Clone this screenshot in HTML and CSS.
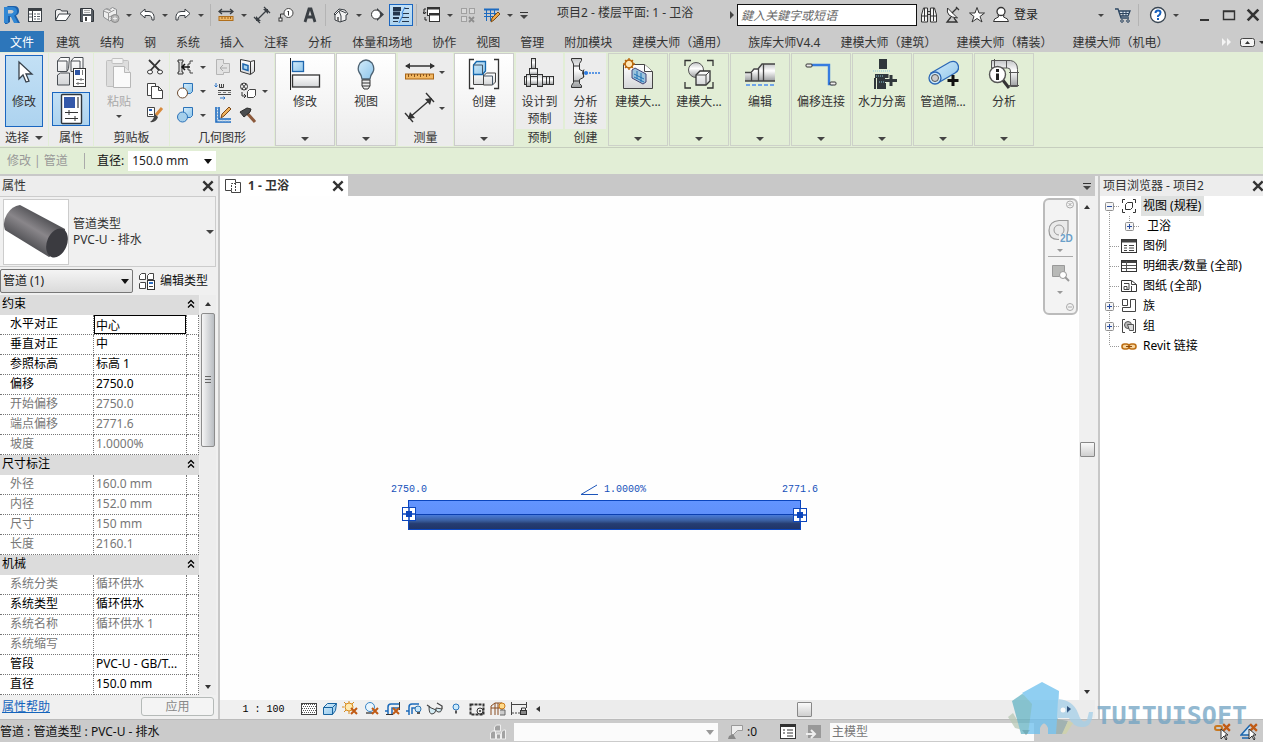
FILE: index.html
```html
<!DOCTYPE html>
<html lang="zh-CN">
<head>
<meta charset="utf-8">
<meta name="viewport" content="width=device-width, initial-scale=1">
<title>项目2 - 楼层平面: 1 - 卫浴</title>
<link rel="stylesheet" href="styles.css">
</head>
<body>
<svg class="sprite" aria-hidden="true">
  <defs>
    <linearGradient id="steel" x1="0" y1="0" x2="0" y2="1"><stop offset="0" stop-color="#c4c6c8"/><stop offset=".4" stop-color="#fff"/><stop offset="1" stop-color="#9a9c9e"/></linearGradient>
    <linearGradient id="soft" x1="0" y1="0" x2="0" y2="1"><stop offset="0" stop-color="#fff"/><stop offset="1" stop-color="#d4d6d8"/></linearGradient>
    <linearGradient id="sky" x1="0" y1="0" x2="1" y2="1"><stop offset="0" stop-color="#d4ecfa"/><stop offset="1" stop-color="#8cc4ea"/></linearGradient>
  </defs>
  <symbol id="leaf" viewBox="0 0 20 20"><path d="M9.500 0V20M10 10.500H20" stroke="#999" stroke-dasharray="1 1" fill="none"/></symbol>
  <symbol id="last" viewBox="0 0 20 20"><path d="M9.500 0V10M10 10.500H20" stroke="#999" stroke-dasharray="1 1" fill="none"/></symbol>
  <symbol id="line" viewBox="0 0 20 20"><path d="M9.500 0V20" stroke="#999" stroke-dasharray="1 1" fill="none"/></symbol>
  <symbol id="plus" viewBox="0 0 20 20"><path d="M9.500 0V20M10 10.500H20" stroke="#999" stroke-dasharray="1 1"/><rect x="5.500" y="6.500" width="8" height="8" rx="1" fill="#f4f4f4" stroke="#919191"/><path d="M7 10.500h5M9.500 8v5" stroke="#2b4ea0"/></symbol>
  <symbol id="plus-alone" viewBox="0 0 20 20"><path d="M9.500 0V6M14 10.500H20" stroke="#999" stroke-dasharray="1 1"/><rect x="5.500" y="6.500" width="8" height="8" rx="1" fill="#f4f4f4" stroke="#919191"/><path d="M7 10.500h5M9.500 8v5" stroke="#2b4ea0"/></symbol>
  <symbol id="minus" viewBox="0 0 20 20"><path d="M9.500 14V20M14 10.500H20" stroke="#999" stroke-dasharray="1 1"/><rect x="5.500" y="6.500" width="8" height="8" rx="1" fill="#f4f4f4" stroke="#919191"/><path d="M7 10.500h5" stroke="#2b4ea0"/></symbol>
  <symbol id="cross" viewBox="0 0 12 12"><path d="M2 2l8 8M10 2l-8 8" stroke="#333" stroke-width="2"/></symbol>
  <symbol id="redx" viewBox="0 0 8 8"><path d="M1 1l6 6M7 1L1 7" stroke="#c05a14" stroke-width="2"/></symbol>
  <symbol id="chev" viewBox="0 0 8 10"><path d="M1 4.500L4 1.500l3 3M1 8.500l3-3 3 3" fill="none" stroke="#000" stroke-width="1.300"/></symbol>
</svg>

<header class="titlebar">
  <nav class="quick" aria-label="快速访问工具栏">
    <button class="app" aria-label="应用程序"><svg width="18" height="20" viewBox="0 0 18 20"><path d="M2 3l3-2h6q5 0 5 5 0 3-3 4.500L17 18h-5l-3.500-6.500L7 12v5l-3 2H2z" fill="#1d5fa8"/><path d="M1 2h8q5 0 5 4.500 0 3-3 4L15 18h-4L7.500 11H5v7H1z" fill="#3187d4"/><path d="M5 5h3.500q2 0 2 1.500t-2 2H5z" fill="#cbcbcb"/></svg></button>
    <button aria-label="项目"><svg width="16" height="16" viewBox="0 0 16 16"><rect x="1.500" y="1.500" width="13" height="13" fill="#fff" stroke="#3a3f44"/><path d="M1 3h14" stroke="#3a3f44" stroke-width="2"/><path d="M5.500 4v10" stroke="#3a3f44"/><path d="M7 7h2M10 7h3M7 9.500h2M10 9.500h3M7 12h2M10 12h3M2 7h3M2 10h3" stroke="#59616a"/></svg></button>
    <span class="space"></span>
    <button aria-label="打开"><svg width="18" height="16" viewBox="0 0 18 16"><path d="M1.500 13V3.500l2-1h3l1 1.500h6v3" fill="#eee" stroke="#3a3f44"/><path d="M1.500 13.500L5 7h11.500L12 13.500z" fill="#fff" stroke="#3a3f44"/></svg></button>
    <button aria-label="保存"><svg width="16" height="16" viewBox="0 0 16 16"><path d="M1.500 1.500h11l2 2v11h-13z" fill="#555b61" stroke="#30353a"/><rect x="4" y="2" width="8" height="5" fill="#f5f5f5"/><path d="M5 3.500h6M5 5.500h6" stroke="#aaa"/><rect x="4" y="9" width="8" height="6" fill="#fff"/><rect x="6" y="10" width="2" height="4" fill="#444"/></svg></button>
    <button aria-label="同步"><svg width="18" height="18" viewBox="0 0 18 18"><path d="M1.500 4.500l3-2 3 1 3-2 4 2V9l-3 4-4 2-6-4z" fill="#eee" stroke="#8d8f91"/><path d="M1.500 5l5 2v7M6.500 7l6-3M4 3l5 2M7 11l5-2" stroke="#999" fill="none"/><circle cx="13" cy="12.500" r="4" fill="#b5b5b5" stroke="#8b8b8b"/><path d="M11 12.500h4M13 10.500v4" stroke="#eee"/></svg></button>
    <button class="drop" aria-label="同步选项"></button>
    <button aria-label="放弃"><svg width="18" height="16" viewBox="0 0 18 16"><path d="M7 2L2 6.500 7 11V8.500h4q3 0 3 4.500h2q1-8-5-8.500H7z" fill="#fff" stroke="#3a3f44"/></svg></button>
    <button class="drop" aria-label="放弃列表"></button>
    <button aria-label="重做"><svg width="18" height="16" viewBox="0 0 18 16"><path d="M11 2l5 4.500-5 4.500V8.500H7q-3 0-3 4.500H2Q1 5 7 4.500h4z" fill="#fff" stroke="#3a3f44"/></svg></button>
    <button class="drop" aria-label="重做列表"></button>
    <span class="sep"></span>
    <button aria-label="测量"><svg width="16" height="14" viewBox="0 0 16 14"><path d="M1 3.500h14M4 1L1 3.500 4 6M12 1l3 2.500L12 6" fill="none" stroke="#3a3f44" stroke-width="1.300"/><rect x="1" y="8.500" width="14" height="4" fill="#f0b866" stroke="#b06f1c"/><path d="M4 9v2M7 9v2M10 9v2M12.500 9v2" stroke="#98601a"/></svg></button>
    <button class="drop" aria-label="测量选项"></button>
    <button aria-label="对齐尺寸标注"><svg width="18" height="18" viewBox="0 0 18 18"><path d="M4 14L14 4M1 11l6 6M11 1l6 6" stroke="#3a3f44" stroke-width="1.300"/><path d="M3 15v-5l5 5zM15 3v5l-5-5z" fill="#3a3f44"/></svg></button>
    <button aria-label="按类别标记"><svg width="18" height="16" viewBox="0 0 18 16"><circle cx="11.500" cy="6" r="4.500" fill="#fff" stroke="#444"/><path d="M10.500 5l1-1v4.500M7 7H3.500v5" fill="none" stroke="#333"/><rect x="2" y="11" width="3" height="3" fill="#fff" stroke="#333"/></svg></button>
    <button aria-label="文字"><svg width="16" height="16" viewBox="0 0 16 16"><path d="M3 15L7 2h2l4 13M5 10h6" fill="none" stroke="#3a3f44" stroke-width="2.800"/></svg></button>
    <span class="sep"></span>
    <button aria-label="默认三维视图"><svg width="18" height="16" viewBox="0 0 18 16"><path d="M2 7l5-5 6 1 3 4-2 1v5l-6 2-5-2V8z" fill="#f2f2f2" stroke="#3a3f44"/><path d="M2 7l1 1 4-4 2 5v6M7 3l7 3" fill="none" stroke="#3a3f44"/><path d="M5 10h2v4H5z" fill="#777"/></svg></button>
    <button class="drop" aria-label="三维视图选项"></button>
    <button aria-label="剖面"><svg width="16" height="16" viewBox="0 0 16 16"><path d="M8 1l7 6.500-7 6.500z" fill="#3a3f44"/><circle cx="7" cy="7.500" r="4.500" fill="#fff" stroke="#333"/></svg></button>
    <button class="on" aria-label="细线" aria-pressed="true"><svg width="18" height="18" viewBox="0 0 18 18"><path d="M1 3h8M1 7.500h7" stroke="#24364c" stroke-width="4"/><path d="M1 12h6" stroke="#24364c" stroke-width="2"/><path d="M1 15.500h5M12 2.500h5M11 7.500h6M10 11.500h7M10 15.500h7" stroke="#24364c"/><path d="M13 1l-3 6 1 2-4 8" fill="none" stroke="#2f80dc"/></svg></button>
    <span class="sep"></span>
    <button aria-label="切换窗口"><svg width="18" height="18" viewBox="0 0 18 18"><rect x="4.500" y="1.500" width="12" height="8" fill="#fff" stroke="#333"/><path d="M4 2.500h13" stroke="#333" stroke-width="2"/><rect x="6.500" y="7.500" width="10" height="8" fill="#fff" stroke="#333"/><path d="M6 8.500h11" stroke="#333" stroke-width="2"/><path d="M3 3H1v5M0 6l1.500 2L3 6M4 14H2v-3" fill="none" stroke="#222"/></svg></button>
    <button class="drop" aria-label="窗口列表"></button>
    <button aria-label="关闭非活动"><svg width="18" height="18" viewBox="0 0 18 18"><g fill="#d8d8d8" stroke="#a0a0a0"><rect x="2.500" y="2.500" width="5" height="5"/><rect x="10.500" y="2.500" width="5" height="5"/><rect x="2.500" y="10.500" width="5" height="5"/></g><path d="M10 11l5 5M15 11l-5 5" stroke="#8e8e8e" stroke-width="1.800"/></svg></button>
    <button aria-label="编辑明细表"><svg width="18" height="16" viewBox="0 0 18 16"><path d="M1 2.500h15" stroke="#1d6bc0" stroke-width="2"/><path d="M1 6.500h14M1 9.500h9M3.500 3v11M7.500 3v11M11.500 3v6" stroke="#1d6bc0"/><path d="M8 15l1-4 6-6 2 2-6 6z" fill="#f0a848" stroke="#7a4c16"/></svg></button>
    <button class="drop" aria-label="明细表选项"></button>
    <button class="custom" aria-label="自定义快速访问工具栏"></button>
  </nav>
  <h1>项目2 - 楼层平面: 1 - 卫浴</h1>
  <button class="right-caret" aria-label="展开搜索"></button>
  <input class="search" type="search" aria-label="搜索" placeholder="鍵入关鍵字或短语">
  <div class="account">
    <button aria-label="搜索"><svg width="18" height="18" viewBox="0 0 18 18"><path d="M1.500 9l2-7h4v14h-6zM10.500 2h4l2 7v7h-6z" fill="#f4f4f4" stroke="#333"/><path d="M2 10h5M11 10h5M4.500 2v13M13.500 2v13M8 5.500h2M8 8.500h2" stroke="#333"/></svg></button>
    <button aria-label="通讯中心"><svg width="18" height="18" viewBox="0 0 18 18"><path d="M3.500 2q-2 9 10 10z" fill="#fff" stroke="#333"/><path d="M8 7l5-5M7 11l-4 5h10l-3-4M12 1l3 3" fill="none" stroke="#333" stroke-width="1.300"/></svg></button>
    <button aria-label="收藏夹"><svg width="18" height="18" viewBox="0 0 18 18"><path d="M9 1.500l2 5.500h5.500L12 10.500l2 5.500-5-3.500L4 16l2-5.500L1.500 7H7z" fill="#fff" stroke="#333"/></svg></button>
    <button aria-label="用户"><svg width="18" height="18" viewBox="0 0 18 18"><path d="M1.500 15.500q0-3 5-4.500l-.5-2h6l-.5 2q5 1.500 5 4.500z" fill="#fff" stroke="#333"/><circle cx="9" cy="5.500" r="4" fill="#fff" stroke="#333" stroke-width="1.300"/></svg></button>
    <a href="#login">登录</a>
  </div>
  <div class="window-tools">
    <button class="drop" aria-label="账户选项"></button>
    <button class="cart" aria-label="应用商店"><svg width="18" height="18" viewBox="0 0 18 18"><path d="M1 3h3l3 9h8M5 5h11l-2 5H6" fill="#dce7f2" stroke="#2c4560" stroke-width="1.300"/><path d="M9 5v5M12 5v5M6 7.500h9" stroke="#2c4560"/><circle cx="8" cy="15" r="1.300" fill="none" stroke="#2c4560"/><circle cx="14" cy="15" r="1.300" fill="none" stroke="#2c4560"/></svg></button>
    <span class="sep"></span>
    <button class="help" aria-label="帮助"><svg width="18" height="18" viewBox="0 0 18 18"><circle cx="9" cy="9" r="7.500" fill="#fff" stroke="#3a4652" stroke-width="1.300"/><path d="M6.500 7q0-2.500 2.500-2.500t2.500 2-2.500 3.500v1M9 12v2" fill="none" stroke="#1660bd" stroke-width="2"/></svg></button>
    <button class="drop" aria-label="帮助选项"></button>
    <button class="win min" aria-label="最小化"><svg width="14" height="14" viewBox="0 0 14 14"><path d="M3 12h9" stroke="#333" stroke-width="2"/></svg></button>
    <button class="win" aria-label="最大化"><svg width="14" height="14" viewBox="0 0 14 14"><path d="M1.500 3h11v8.500h-11zM1 3.500h12" fill="none" stroke="#333" stroke-width="1.400"/></svg></button>
    <button class="win last" aria-label="关闭"><svg width="16" height="16" viewBox="0 0 12 12"><use href="#cross"/></svg></button>
  </div>
</header>

<nav class="tabs" aria-label="功能区选项卡">
  <a class="file" href="#file">文件</a>
  <a href="#t1">建筑</a><a href="#t2">结构</a><a href="#t3">钢</a><a href="#t4">系统</a><a href="#t5">插入</a><a href="#t6">注释</a><a href="#t7">分析</a><a href="#t8">体量和场地</a><a href="#t9">协作</a><a href="#t10">视图</a><a href="#t11">管理</a><a href="#t12">附加模块</a><a href="#t13">建模大师（通用）</a><a href="#t14">族库大师V4.4</a><a href="#t15">建模大师（建筑）</a><a href="#t16">建模大师（精装）</a><a href="#t17">建模大师（机电）</a>
  <button class="more" aria-label="更多选项卡"><svg width="42" height="14" viewBox="0 0 42 14"><path d="M1 3l4 4-4 4zM6 3l4 4-4 4z" fill="#f4f4f4"/><rect x="19.500" y="3.500" width="14" height="8" rx="2" fill="#f4f4f4" stroke="#444"/><path d="M24 9l2.500-3L29 9z" fill="#333"/><path d="M38 6h6l-3 3z" fill="#333"/></svg></button>
</nav>

<main class="ribbon">
  <section class="panel select">
    <div class="tools"><button class="big on"><svg width="32" height="32" viewBox="0 0 32 32"><path d="M11 5v17l4-4 3 7 3-1-3-7h6z" fill="#fff" stroke="#38424c" stroke-width="1.300"/></svg><span>修改</span></button></div>
    <button class="name">选择<i class="tri"></i></button>
  </section>
  <section class="panel props">
    <div class="tools stack">
      <button class="mid" aria-label="类型属性"><svg width="32" height="32" viewBox="0 0 32 32"><g fill="url(#soft)" stroke="#4a4f54"><path d="M2.500 5l3-3.500h9l-1 11-1.500 3H2.500zM16 5l3-3.500h9V12l-3 3.500h-9zM2.500 19l3-2h9v12h-12z"/><path d="M2.500 5h9.500v10M16 5h9v10" fill="none"/></g><rect x="18.500" y="12.500" width="12" height="18" fill="#fff" stroke="#333"/><rect x="20" y="14" width="5" height="5" fill="#2f55a5"/><path d="M27.500 14v5M21 23.500h8M21 27.500h8M26 22v3M23 26v3" stroke="#777"/></svg></button>
      <button class="mid on" aria-label="属性"><svg width="32" height="32" viewBox="0 0 32 32"><rect x="6.500" y="1.500" width="20" height="29" rx="1" fill="#fff" stroke="#30363c" stroke-width="1.400"/><rect x="9" y="4" width="11" height="11" fill="#3459aa"/><rect x="22" y="4" width="2" height="11" fill="#888"/><path d="M10 19.500h13M10 25.500h13M14 17v5M20 23v5" stroke="#333"/></svg></button>
    </div>
    <button class="name">属性</button>
  </section>
  <section class="panel clip">
    <div class="tools">
      <button class="big off" disabled><svg width="32" height="32" viewBox="0 0 32 32"><rect x="3.500" y="3.500" width="22" height="26" rx="1" fill="#ddd" stroke="#c0c0c0"/><rect x="9" y="1.500" width="11" height="5" rx="1" fill="#f3f3f3" stroke="#c0c0c0"/><path d="M10.500 9.500h11l6 6v15h-17z" fill="#fafafa" stroke="#b8b8b8"/><path d="M21.500 9.500v6h6" fill="#e8e8e8" stroke="#b8b8b8"/></svg><span>粘贴</span><i class="tri small"></i></button>
      <div class="grid one">
        <button aria-label="剪切"><svg width="18" height="18" viewBox="0 0 18 18"><path d="M3 2l11 11M14 2L4 13" stroke="#333" stroke-width="1.800"/><ellipse cx="4" cy="14" rx="2.500" ry="2" fill="#fff" stroke="#333"/><ellipse cx="14" cy="14" rx="2.500" ry="2" fill="#fff" stroke="#333"/></svg></button>
        <button aria-label="复制"><svg width="18" height="18" viewBox="0 0 18 18"><path d="M1.500 1.500h8v12h-8z" fill="#fff" stroke="#444"/><path d="M5.500 4.500h7l4 4v8h-11zM12.500 4.500v4h4" fill="#fff" stroke="#444"/></svg></button>
        <button aria-label="匹配类型"><svg width="18" height="18" viewBox="0 0 18 18"><path d="M1.500 1.500h7v9h-7z" fill="#fff" stroke="#444"/><path d="M3 4h3" stroke="#2a62b8" stroke-width="2"/><path d="M3 8.500h4" stroke="#444"/><path d="M16 2l-6 7" stroke="#d88a3c" stroke-width="3"/><path d="M9 8l3 3q-2 6-8 5 4-3 5-8" fill="#444"/></svg></button>
      </div>
    </div>
    <button class="name">剪贴板</button>
  </section>
  <section class="panel geo">
    <div class="tools">
      <div class="grid three">
        <button aria-label="连接端切割"><svg width="18" height="18" viewBox="0 0 18 18"><path d="M2 2h5v2H6v10h1v2H2v-2h1V4H2z" fill="#ddd" stroke="#333"/><path d="M17 3h-3v3h-2v6h2v3h3" fill="#eee" stroke="#444"/><path d="M14 9H6M9 6L6 9l3 3" fill="none" stroke="#111" stroke-width="1.500"/></svg></button><button class="drop" aria-label="切割选项"></button>
        <button aria-label="拆分"><svg width="18" height="18" viewBox="0 0 18 18"><path d="M2.500 1.500h7v4h6v9h-6v2h-7z" fill="#e2e2e2" stroke="#b5b5b5"/><path d="M13 10H6M9 7l-3 3 3 3" fill="none" stroke="#aaa"/></svg></button>
        <button aria-label="拆分面"><svg width="18" height="18" viewBox="0 0 18 18"><path d="M1.500 1.500l10 2 4-1v11l-4 3-10-3z" fill="url(#soft)" stroke="#333"/><path d="M11.500 4v12" stroke="#333"/><path d="M4 6l5 1.500v5L4 11z" fill="#a9d5f0" stroke="#1e66ad" stroke-width="1.500"/></svg></button><span></span>
        <button aria-label="剪切几何图形"><svg width="18" height="18" viewBox="0 0 18 18"><path d="M7.500 1.500h9v8l-2 2h-7z" fill="url(#sky)" stroke="#2b72b8"/><circle cx="6.500" cy="11" r="5" fill="#fff" stroke="#6b4a30"/></svg></button><button class="drop" aria-label="剪切选项"></button>
        <button aria-label="梁柱连接"><svg width="18" height="18" viewBox="0 0 18 18"><path d="M2 1v4M.5 3.500L2 5l1.500-1.500M6 16h5M9.500 14.500L11 16l-1.500 1.500" stroke="#2b74c8" fill="none"/><path d="M5.500 2v3.500h4V2M7.500 2v3" stroke="#444" fill="none"/><path d="M4 8.500h13M4 12.500h13" stroke="#444"/><path d="M4 10.500h13" stroke="#777" stroke-dasharray="3 2"/></svg></button>
        <button aria-label="墙连接"><svg width="18" height="18" viewBox="0 0 18 18"><circle cx="5" cy="4.500" r="3.500" fill="#eee" stroke="#333"/><path d="M3 2l4 5M7 2L3 7M3 10v4h4M5 12l2 2-2 2" fill="none" stroke="#333"/><path d="M8.500 9.500l2-2h6v6l-2 2h-6z" fill="#fff" stroke="#444"/></svg></button><button class="drop" aria-label="墙选项"></button>
        <button aria-label="连接几何图形"><svg width="18" height="18" viewBox="0 0 18 18"><path d="M7.500 1.500h9v8l-2 2h-7z" fill="url(#sky)" stroke="#2b72b8"/><circle cx="6.500" cy="11" r="5" fill="#a5cfeb" stroke="#2b72b8"/></svg></button><button class="drop" aria-label="连接选项"></button>
        <button aria-label="填色"><svg width="18" height="18" viewBox="0 0 18 18"><path d="M2 1v15h15M5 1v12h12" fill="none" stroke="#1d6bc0" stroke-width="1.600"/><path d="M3.500 1v14h13" fill="none" stroke="#8bb9e4" stroke-dasharray="2 1"/><path d="M7 12l1-4 7-7 2 2-7 7z" fill="#f0b25c" stroke="#7c4818"/></svg></button>
        <button aria-label="拆除"><svg width="18" height="18" viewBox="0 0 18 18"><path d="M8 7l8 9" stroke="#8c5a3c" stroke-width="3"/><path d="M1 6l7-4 4 1-1 3-6 5z" fill="#4a4d50" stroke="#2b2b2b"/></svg></button><span></span>
      </div>
    </div>
    <button class="name">几何图形</button>
  </section>
  <button class="card light"><svg width="32" height="32" viewBox="0 0 32 32"><path d="M1.500 0v32" stroke="#222"/><rect x="3.500" y="3.500" width="11" height="10" fill="url(#sky)" stroke="#1e66ad" stroke-width="1.300"/><rect x="3.500" y="17" width="27" height="12" fill="url(#soft)" stroke="#333" stroke-width="1.300"/></svg><span>修改</span><i class="tri"></i></button>
  <button class="card light"><svg width="32" height="32" viewBox="0 0 32 32"><path d="M12 21q0-3-3-7-2-4 1-9 6-6 12 0 3 5 1 9-3 4-3 7z" fill="url(#sky)" stroke="#4d6272" stroke-width="1.300"/><path d="M12 22h8v6l-2 3h-4l-2-3zM12 25h8M12 28h8" fill="#eee" stroke="#333"/></svg><span>视图</span><i class="tri"></i></button>
  <section class="panel measure">
    <div class="tools rows">
      <div class="pair"><button aria-label="测量长度"><svg width="32" height="32" viewBox="0 0 32 32"><path d="M2 10h28" stroke="#333" stroke-width="1.500"/><path d="M6 7l-5 3 5 3zM26 7l5 3-5 3z" fill="#333"/><rect x="1.500" y="18" width="28" height="5" fill="#f2b762" stroke="#a86516"/><path d="M4.500 18v3M7.500 18v2M10.500 18v3M13.500 18v2M16.500 18v3M19.500 18v2M22.500 18v3M25.500 18v2" stroke="#88541c"/></svg></button><button class="drop" aria-label="长度选项"></button></div>
      <div class="pair"><button aria-label="尺寸标注"><svg width="32" height="32" viewBox="0 0 32 32"><path d="M5 26L27 7M1 21l8 9M22 1l8 9" stroke="#333" stroke-width="1.400"/><path d="M4 27l2-7 5 6zM28 6l-7 1 5 6z" fill="#333"/></svg></button><button class="drop" aria-label="标注选项"></button></div>
    </div>
    <button class="name">测量</button>
  </section>
  <button class="card light"><svg width="32" height="32" viewBox="0 0 32 32"><path d="M6 1.500H1.500v29H6M26 1.500h4.500v29H26" fill="none" stroke="#333" stroke-width="1.300"/><path d="M5.500 16.500h10v10h-10zM15.500 18l3-3h9v9l-3 3h-9z" fill="url(#soft)" stroke="#444"/><path d="M5.500 7l3-3.500h9V13l-3 3.500h-9z" fill="url(#sky)" stroke="#1769ae" stroke-width="1.300"/><path d="M5.500 7h9v9M15.500 18h9v9" fill="none" stroke="#456"/></svg><span>创建</span><i class="tri"></i></button>
  <section class="panel prefab">
    <div class="tools"><button class="big two"><svg width="32" height="32" viewBox="0 0 32 32"><g fill="url(#steel)" stroke="#333"><rect x="8.500" y="1.500" width="4" height="10"/><rect x="6.500" y="11.500" width="8" height="6"/><rect x="1.500" y="19.500" width="29" height="8"/><rect x="3.500" y="17.500" width="4" height="12"/><rect x="14.500" y="17.500" width="5" height="12"/></g><path d="M23.500 20v7M26.500 20v7" stroke="#333"/></svg><span>设计到<br>预制</span></button></div>
    <button class="name green">预制</button>
  </section>
  <section class="panel analyse">
    <div class="tools"><button class="big two"><svg width="32" height="32" viewBox="0 0 32 32"><path d="M1.500 1.500h10v2l-2 3v6l4 2v6l-4 2v4l2 2v2h-10v-2l2-3V7l-2-4zM4 9h5M4 24h5" fill="url(#steel)" stroke="#333"/><path d="M14 12.500q-3 3.500 0 7" fill="none" stroke="#333"/><path d="M16 16h15" stroke="#2d7be0" stroke-width="1.300" stroke-dasharray="2 1"/><circle cx="16" cy="16" r="2" fill="#2d7be0"/></svg><span>分析<br>连接</span></button></div>
    <button class="name green">创建</button>
  </section>
  <button class="card"><svg width="32" height="32" viewBox="0 0 32 32"><path d="M1.500 6.500h21l8 7v17h-29z" fill="url(#soft)" stroke="#444"/><path d="M22.500 6.500v7h8" fill="#fff" stroke="#444"/><path d="M10 12l3-2 11 6v8l-3 2-11-6z" fill="#9cc4dd" stroke="#447"/><path d="M12 16l10 5M12 19l10 5M15 13v8M19 15v9" stroke="#2073b5"/><circle cx="7" cy="6" r="4" fill="#ffe7b5" stroke="#b8660c" stroke-width="1.500"/><path d="M7 0v3M7 9v3M1 6h3M10 6h3M3 2l2 2M9 8l2 2M11 2L9 4M5 8l-2 2" stroke="#b8660c" stroke-width="1.300"/></svg><span>建模大...</span><i class="tri"></i></button>
  <button class="card"><svg width="32" height="32" viewBox="0 0 32 32"><path d="M2 8V2.500h6M24 2.500h6V8M2 24v6h6M24 30h6v-6" fill="none" stroke="#333" stroke-width="1.300"/><circle cx="13" cy="12" r="7.500" fill="url(#steel)" stroke="#555"/><path d="M13 17l4-4h10v10l-4 4H13z" fill="url(#soft)" stroke="#333" stroke-width="1.300"/><path d="M13 17h10v10M23 17l4-4" fill="none" stroke="#444"/></svg><span>建模大...</span><i class="tri"></i></button>
  <button class="card"><svg width="32" height="32" viewBox="0 0 32 32"><path d="M1 15h6v8H1zM7 12l7-2v13H7zM14 9l6-3v17h-6z" fill="url(#steel)"/><path d="M19 6h12v17H19z" fill="url(#steel)"/><path d="M1 14.500h6l3-3.500h4l4-5h13M1 23h30M7.500 15v8M14.500 10v13M19.500 6v17" fill="none" stroke="#444" stroke-width="1.300"/><path d="M2 27h29" stroke="#4b8df0" stroke-width="1.500" stroke-dasharray="4 2"/></svg><span>编辑</span><i class="tri"></i></button>
  <button class="card"><svg width="32" height="32" viewBox="0 0 32 32"><path d="M6 7h18v19h4" fill="none" stroke="#367ce0" stroke-width="2.400"/><rect x="1" y="6" width="6" height="3" rx="1" fill="#eee" stroke="#333"/><rect x="25" y="24" width="6" height="3" rx="1" fill="#eee" stroke="#333"/></svg><span>偏移连接</span><i class="tri"></i></button>
  <button class="card"><svg width="32" height="32" viewBox="0 0 32 32"><path d="M13 1h8v10h-8zM9 16h14v5h-3v10h-9V20H9zM8 20h2v11H8z" fill="#30373b"/><path d="M7 13h18M10 18h7M13 24h7" stroke="#8ac7d8" stroke-dasharray="1 1"/><path d="M25 16v12M19 22.500h12" stroke="#e2eed6" stroke-width="5"/><path d="M25 17v11M19 22.500h12" stroke="#30373b" stroke-width="3"/></svg><span>水力分离</span><i class="tri"></i></button>
  <button class="card"><svg width="32" height="32" viewBox="0 0 32 32"><path d="M4 15L23 4q6-2 8 3t-3 8L11 25z" fill="url(#sky)" stroke="#2b67b5" stroke-width="1.300"/><circle cx="8" cy="20" r="6" fill="#cce8f8" stroke="#2b67b5" stroke-width="1.300"/><circle cx="8" cy="20" r="3.500" fill="#ccc" stroke="#555"/><path d="M26 17v11M20.500 22.500h11" stroke="#111" stroke-width="3"/></svg><span>管道隔...</span><i class="tri"></i></button>
  <button class="card"><svg width="32" height="32" viewBox="0 0 32 32"><path d="M3.500 2.500h19q7 1 7 9v17h-7V13q0-3-3-3h-16z" fill="url(#steel)" stroke="#555"/><path d="M6.500 1v11M21 27.500h10M21 14.500h10M18.500 2v8" stroke="#555"/><path d="M14 21l7 9" stroke="#333" stroke-width="3"/><circle cx="9.500" cy="16.500" r="8" fill="#fff" stroke="#555" stroke-width="1.400"/><path d="M9.500 11v3M9.500 15.500V22" stroke="#222" stroke-width="3"/></svg><span>分析</span><i class="tri"></i></button>
</main>

<section class="options">
  <span class="mode">修改 | 管道</span>
  <label for="dia">直径:</label>
  <span class="drop-box"><select id="dia"><option>150.0 mm</option></select></span>
</section>

<div class="work">
  <aside class="properties">
    <div class="head"><h2>属性</h2><button aria-label="关闭属性"><svg width="14" height="14" viewBox="0 0 12 12"><use href="#cross"/></svg></button></div>
    <button class="type">
      <svg class="thumb" width="66" height="66" viewBox="0 0 66 66"><defs><linearGradient id="pipe" gradientUnits="userSpaceOnUse" x1="42" y1="16" x2="24" y2="46"><stop offset="0" stop-color="#4c4c50"/><stop offset=".5" stop-color="#89868a"/><stop offset="1" stop-color="#515155"/></linearGradient></defs><rect x=".5" y=".5" width="65" height="65" fill="#fff" stroke="#ccc"/><path d="M17 6Q9 7 4 15T2 31L46 58Q64 50 62 30z" fill="url(#pipe)"/><ellipse cx="54" cy="44" rx="10" ry="15" transform="rotate(22 54 44)" fill="#3b3b40"/></svg>
      <span>管道类型<br>PVC-U - 排水</span><i class="tri"></i>
    </button>
    <div class="filter">
      <span class="drop-box"><select aria-label="图元"><option>管道 (1)</option></select></span>
      <button><svg width="18" height="18" viewBox="0 0 18 18"><path d="M1.500 3.500l2-2h4v6h-6zM9.500 3.500l2-2h4v6h-6zM1.500 11.500l1-1h5v6h-6z" fill="#fff" stroke="#444"/><rect x="9.500" y="8.500" width="7" height="9" fill="#fff" stroke="#333"/><path d="M11 11h4" stroke="#2d6fc4" stroke-width="2"/><path d="M11 14.500h4" stroke="#444"/></svg>编辑类型</button>
    </div>
    <div class="sheet">
      <table>
        <colgroup><col class="c1"><col><col class="c3"></colgroup>
        <tbody>
          <tr class="group"><th colspan="2">约束</th><td><svg width="8" height="10"><use href="#chev"/></svg></td></tr>
          <tr><th>水平对正</th><td class="edit"><input aria-label="水平对正" value="中心"></td><td></td></tr>
          <tr><th>垂直对正</th><td>中</td><td></td></tr>
          <tr><th>参照标高</th><td>标高 1</td><td></td></tr>
          <tr><th>偏移</th><td>2750.0</td><td></td></tr>
          <tr class="ro"><th>开始偏移</th><td>2750.0</td><td></td></tr>
          <tr class="ro"><th>端点偏移</th><td>2771.6</td><td></td></tr>
          <tr class="ro"><th>坡度</th><td>1.0000%</td><td></td></tr>
          <tr class="group"><th colspan="2">尺寸标注</th><td><svg width="8" height="10"><use href="#chev"/></svg></td></tr>
          <tr class="ro"><th>外径</th><td>160.0 mm</td><td></td></tr>
          <tr class="ro"><th>内径</th><td>152.0 mm</td><td></td></tr>
          <tr class="ro"><th>尺寸</th><td>150 mm</td><td></td></tr>
          <tr class="ro"><th>长度</th><td>2160.1</td><td></td></tr>
          <tr class="group"><th colspan="2">机械</th><td><svg width="8" height="10"><use href="#chev"/></svg></td></tr>
          <tr class="ro"><th>系统分类</th><td>循环供水</td><td></td></tr>
          <tr><th>系统类型</th><td>循环供水</td><td></td></tr>
          <tr class="ro"><th>系统名称</th><td>循环供水 1</td><td></td></tr>
          <tr class="ro"><th>系统缩写</th><td></td><td></td></tr>
          <tr><th>管段</th><td>PVC-U - GB/T...</td><td></td></tr>
          <tr><th>直径</th><td>150.0 mm</td><td></td></tr>
        </tbody>
      </table>
      <div class="vbar"><i class="up"></i><i class="thumb-v"></i><i class="down"></i></div>
    </div>
    <div class="foot"><a href="#help">属性帮助</a><button disabled>应用</button></div>
  </aside>

  <section class="view">
    <div class="doc-tabs">
      <div class="doc"><svg width="18" height="16" viewBox="0 0 18 16"><path d="M1.500 1.500h10v3h5v10h-9v-2h-6z" fill="#fff" stroke="#444"/><path d="M7.500 12V5.500h4M11.500 5v10" fill="none" stroke="#444" stroke-dasharray="2 1"/></svg><strong>1 - 卫浴</strong><button aria-label="关闭视图"><svg width="14" height="14" viewBox="0 0 12 12"><use href="#cross"/></svg></button></div>
      <button class="custom" aria-label="视图列表"></button>
    </div>
    <div class="stage">
      <div class="canvas">
        <svg class="drawing" width="440" height="60" viewBox="0 0 440 60">
          <defs><linearGradient id="duct" x1="0" y1="0" x2="0" y2="1"><stop offset="0" stop-color="#6294ff"/><stop offset=".45" stop-color="#6090fa"/><stop offset=".5" stop-color="#4a7bd8"/><stop offset=".7" stop-color="#395d9e"/><stop offset=".8" stop-color="#263d72"/><stop offset="1" stop-color="#1f3468"/></linearGradient></defs>
          <rect x="28.500" y="20.500" width="392" height="29" fill="url(#duct)" stroke="#0b45bd"/>
          <path d="M28 34.500h393" stroke="#0b3fb0"/>
          <path d="M217 5l-16 9.500h17" fill="none" stroke="#1c55ba"/>
          <g fill="#fff" stroke="#0b45bd"><rect x="22.500" y="27.500" width="13" height="13"/><rect x="413.500" y="28.500" width="13" height="13"/></g>
          <path d="M22 34h14M29 27v14M413 35h14M420 28v14" stroke="#0b45bd" stroke-width="1.500"/><path d="M26 31h6v6h-6zM417 32h6v6h-6z" fill="#0b45bd"/>
          <text x="11" y="12">2750.0</text><text x="224" y="12">1.0000%</text><text x="402" y="12">2771.6</text>
        </svg>
        <div class="navbar">
          <svg width="35" height="117" viewBox="0 0 35 117"><rect x="1" y="1" width="33" height="115" rx="5" fill="#f3f3f3" stroke="#bbb" stroke-width="2"/><g fill="none" stroke="#aaa"><circle cx="27" cy="6.500" r="3.500"/><path d="M25.500 5l3 3M28.500 5l-3 3M5 58.500h25"/><circle cx="27" cy="109" r="3.500"/><path d="M25 109h4"/></g><path d="M16 22.500h9v10q-1 9-10 9t-9-9 10-10z" fill="#eaeaea" stroke="#999" stroke-width="1.200"/><circle cx="16" cy="32" r="5" fill="none" stroke="#999"/><path d="M16 36h14v9H16z" fill="#f3f3f3"/><text x="17" y="44">2D</text><path d="M14 51h6l-3 3zM14 93h6l-3 3z" fill="#999"/><path d="M9.500 67.500h12v11h-12z" fill="#b8b9b7" stroke="#999"/><circle cx="20" cy="77" r="3.500" fill="#fff" stroke="#999"/><path d="M22 79l4 4" stroke="#999" stroke-width="2"/></svg>
        </div>
      </div>
      <div class="vbar wide"><i class="up"></i><i class="thumb-v"></i><i class="down"></i></div>
    </div>
    <div class="view-bar">
      <div class="controls">
        <button class="scale">1 : 100</button>
        <button aria-label="详细程度"><svg width="16" height="12" viewBox="0 0 16 12"><rect x=".5" y=".5" width="15" height="11" fill="#fff" stroke="#444"/><path d="M1 1.500h14M2 3.500h13M1 5.500h14M2 7.500h13M1 9.500h14" stroke="#555" stroke-dasharray="1 1"/></svg></button>
        <button aria-label="视觉样式"><svg width="16" height="14" viewBox="0 0 16 14"><path d="M1.500 5.500l4-4h9l-1 7-3 4h-9zM1.500 5.500h9v7M10.500 5.500l4-4" fill="url(#sky)" stroke="#17629e"/></svg></button>
        <button aria-label="日光路径"><svg width="18" height="16" viewBox="0 0 18 16"><circle cx="7" cy="6" r="4" fill="#ffe9b0" stroke="#d78a1c"/><path d="M7 0v2M7 10v3M0 6h2M2 1l2 2M2 11l2-2M12 1l-2 2" stroke="#d78a1c"/><use href="#redx" x="8" y="6" width="8" height="8"/></svg></button>
        <button aria-label="阴影"><svg width="18" height="16" viewBox="0 0 18 16"><circle cx="7" cy="6" r="4.500" fill="#e9f5fd" stroke="#3a86c8"/><path d="M3 12h7" stroke="#777" stroke-width="2"/><use href="#redx" x="8" y="6" width="8" height="8"/></svg></button>
        <button aria-label="裁剪视图"><svg width="18" height="16" viewBox="0 0 18 16"><path d="M4 14V6q0-3 3-3h9M8 13V7h8M1 10h3" fill="none" stroke="#1c6bba" stroke-width="1.500"/><path d="M15.500 1v8M2 13.500h7" stroke="#333"/><use href="#redx" x="8" y="6" width="8" height="8"/></svg></button>
        <button aria-label="显示裁剪"><svg width="18" height="16" viewBox="0 0 18 16"><path d="M4 14V6q0-3 3-3h7M7 13V7h3M1 10h3" fill="none" stroke="#1c6bba" stroke-width="1.500"/><circle cx="13" cy="8" r="3" fill="#c8e7fa" stroke="#2f73af"/><path d="M12 11h3v2h-3z" fill="#555"/></svg></button>
        <button aria-label="临时隐藏"><svg width="18" height="16" viewBox="0 0 18 16"><path d="M1 4l3 2M11 2l5 3v3" fill="none" stroke="#444" stroke-width="1.300"/><path d="M3 6l7 3q-1 4-4 4t-3-7zM10 7l6 1q-1 4-4 3t-2-4z" fill="#d3ecf4" stroke="#444"/></svg></button>
        <button aria-label="显示隐藏的图元"><svg width="10" height="14" viewBox="0 0 10 14"><circle cx="5" cy="5" r="3" fill="#cceafb" stroke="#2a78c0"/><path d="M4 8.500h2v3H4z" fill="#555"/></svg></button>
        <button aria-label="临时视图属性"><svg width="16" height="14" viewBox="0 0 16 14"><path d="M1.500 2.500h13v10h-13z" fill="#eee" stroke="#333" stroke-width="2" stroke-dasharray="3 1"/><circle cx="11" cy="9" r="3" fill="#eee" stroke="#333"/><circle cx="11" cy="9" r="1" fill="#333"/></svg></button>
        <button aria-label="分析模型"><svg width="18" height="16" viewBox="0 0 18 16"><path d="M2 14V5l4-3h7v11M2 7h11M6 2v12M9 2v12" fill="#eee" stroke="#8a4c20"/><circle cx="13" cy="5" r="3" fill="#ffdb8b" stroke="#cc7a17"/><path d="M11 9h5v5h-5" stroke="#666" fill="#ccc"/></svg></button>
        <button aria-label="约束"><svg width="18" height="16" viewBox="0 0 18 16"><path d="M1.500 1v13M16.500 1v6M2 3.500h14" stroke="#444"/><path d="M2 12h8" stroke="#444" stroke-dasharray="2 1"/><rect x="10.500" y="9.500" width="6" height="4" fill="#888" stroke="#333"/><path d="M11.500 9V7h4v2" stroke="#333" fill="none"/></svg></button>
      </div>
      <div class="hbar"><i class="left"></i><i class="thumb-h"></i><i class="right"></i></div>
    </div>
  </section>

  <aside class="browser">
    <div class="head"><h2>项目浏览器 - 项目2</h2><button aria-label="关闭浏览器"><svg width="14" height="14" viewBox="0 0 12 12"><use href="#cross"/></svg></button></div>
    <ul class="tree">
      <li><svg class="node"><use href="#minus"/></svg><svg class="ico" viewBox="0 0 16 16"><path d="M4 1.500H1.500V5M1.500 11v3.500H4M12 1.500h2.500V5M14.500 11v3.500H12" fill="none" stroke="#333"/><path d="M4.500 6.500l2-2h5v5l-2 2h-5z" fill="#fff" stroke="#333"/></svg><span class="sel">视图 (规程)</span></li>
      <li class="child"><svg class="node"><use href="#line"/></svg><svg class="node"><use href="#plus-alone"/></svg><span>卫浴</span></li>
      <li><svg class="node"><use href="#leaf"/></svg><svg class="ico" viewBox="0 0 16 16"><rect x=".5" y="1.500" width="15" height="13" fill="#fff" stroke="#333"/><path d="M1 3h14" stroke="#444" stroke-width="3"/><path d="M3 7.500h3M8 7.500h5M3 10h3M8 10h5M3 12.500h3M8 12.500h5" stroke="#444"/></svg><span>图例</span></li>
      <li><svg class="node"><use href="#leaf"/></svg><svg class="ico" viewBox="0 0 16 16"><rect x=".5" y="2.500" width="15" height="11" fill="#fff" stroke="#333"/><path d="M1 4h14" stroke="#444" stroke-width="2"/><path d="M1 7.500h14M1 10.500h14M5.500 3v10" stroke="#555"/></svg><span>明细表/数量 (全部)</span></li>
      <li><svg class="node"><use href="#leaf"/></svg><svg class="ico" viewBox="0 0 16 16"><path d="M.5 2.500h10l5 4v7H.5z" fill="#fff" stroke="#333"/><path d="M3 5.500h5v6H3v-3h3v3M10.500 3v3.500h5M10.500 8v5" fill="none" stroke="#444"/></svg><span>图纸 (全部)</span></li>
      <li><svg class="node"><use href="#plus"/></svg><svg class="ico" viewBox="0 0 16 16"><path d="M1.500 1.500h5v6h-5zM9.500 1.500h5v12h-13v-4h8z" fill="#fff" stroke="#444"/></svg><span>族</span></li>
      <li><svg class="node"><use href="#plus"/></svg><svg class="ico" viewBox="0 0 16 16"><path d="M4 1.500H1.500v13H4M12 1.500h2.500v13H12" fill="none" stroke="#444"/><circle cx="7" cy="7" r="3.500" fill="#bbb" stroke="#555"/><path d="M6.500 6.500h6v6h-4z" fill="#ddd" stroke="#555"/></svg><span>组</span></li>
      <li><svg class="node"><use href="#last"/></svg><svg class="ico" viewBox="0 0 16 16"><rect x="1" y="6" width="7" height="5" rx="2.500" fill="#f7d6a0" stroke="#bd6f16" stroke-width="1.600"/><rect x="8" y="6" width="7" height="5" rx="2.500" fill="#f7d6a0" stroke="#bd6f16" stroke-width="1.600"/><path d="M5 8.500h6" stroke="#8c4b10"/></svg><span>Revit 链接</span></li>
    </ul>
  </aside>
</div>

<footer class="status">
  <output>管道 : 管道类型 : PVC-U - 排水</output>
  <div class="status-tools">
    <svg width="18" height="18" viewBox="0 0 18 18"><path d="M1.500 10l2-2h3v8h-5zM7.500 11h4v5h-4zM12.500 9l2-2h2v9h-4zM5.500 4l2-2h4v6h-6z" fill="#a2a2a2" stroke="#eee"/></svg>
    <span class="drop-box pale"><select aria-label="工作集"><option></option></select></span>
    <svg class="filter-i" width="18" height="18" viewBox="0 0 18 18"><path d="M5.500 2.500h11v5h-5L7 12H5.500z" fill="#eee" stroke="#999"/><path d="M2 16h8l-3-5-4 2z" fill="#888"/></svg><span class="count">:0</span>
    <button aria-label="设计选项"><svg width="18" height="18" viewBox="0 0 18 18"><rect x="1.500" y="1.500" width="15" height="14" fill="#fff" stroke="#333"/><path d="M1 3h16" stroke="#333" stroke-width="2"/><path d="M4 7h2M8 7h6M4 10h2M8 10h6M8 13h6" stroke="#333"/></svg></button>
    <svg class="add-i" width="18" height="18" viewBox="0 0 18 18"><rect x="3" y="2" width="13" height="13" fill="#999"/><path d="M1 11h8M6 7l4 4-4 4" fill="none" stroke="#eee" stroke-width="2"/></svg>
    <span class="drop-box pale model"><select aria-label="设计选项"><option>主模型</option></select></span>
  </div>
  <div class="select-tools">
    <button aria-label="选择链接"><svg width="18" height="18" viewBox="0 0 18 18"><rect x="1" y="3" width="7" height="4" rx="2" fill="none" stroke="#c87820" stroke-width="2"/><use href="#redx" x="8" y="0" width="9" height="9"/><path d="M7 6v10l3-3 2 4 1-1-2-4h3z" fill="#fff" stroke="#333"/></svg></button>
    <button aria-label="选择基线"><svg width="18" height="18" viewBox="0 0 18 18"><path d="M10 2L1 12h9M2 15h8" fill="#cbe4f7" stroke="#1a66ad" stroke-width="1.500"/><use href="#redx" x="9" y="0" width="9" height="9"/><path d="M9 6v10l3-3 2 4 1-1-2-4h3z" fill="#fff" stroke="#333"/></svg></button>
  </div>
</footer>

<div class="watermark" aria-hidden="true">
  <svg width="86" height="56" viewBox="0 0 86 56"><path d="M0 37l5-4 10 17-8-2z" fill="#b8c9b6"/><path d="M4 21l10-7 10 2v38h-11z" fill="#65b4c4"/><path d="M14 13L34 2l17 9-2 43H40v-6q-4-9-8 0v6H20l4-30z" fill="#6cc0ee"/><path d="M50 19q15 1 20 14 4 12 9 7l2-8h4q-1 15-10 15-9 1-14-9H49z" fill="#a5cfe8"/><path d="M49 39l11 2-5 13h-7z" fill="#94aaa9"/><path d="M60 41l5 2-7 11h-4z" fill="#d0d4a6"/><circle cx="55" cy="30" r="2.500" fill="#fff"/><path d="M59 26l4 3-4 4z" fill="#315e96"/></svg>
  <span>TUITUISOFT</span>
</div>
</body>
</html>
```

FILE: styles.css
```css
* { box-sizing: border-box; }
body {
  margin: 0;
  height: 100vh;
  display: flex;
  flex-direction: column;
  overflow: hidden;
  position: relative;
  background: #cbcbcb;
  color: #222;
  font: 12px/16px "Noto Sans", "Noto Sans CJK SC", sans-serif;
}
button, select, input { font: inherit; color: inherit; }
button { border: 0; padding: 0; background: none; display: flex; align-items: center; justify-content: center; flex: none; }
svg { display: block; flex: none; }
h1, h2 { margin: 0; font-size: 12px; font-weight: 400; color: #333; }
.sprite { width: 0; height: 0; position: absolute; }

/* small arrows */
.drop { width: 12px; }
.drop::before, .tri, .custom::before { content: ""; border: 3px solid transparent; border-top: 3px solid #444; border-bottom: 0; }
.tri { border-width: 4px; border-top-width: 4px; border-bottom: 0; }
.tri.small { border-width: 3px; border-bottom: 0; }
.custom { width: 16px; flex-direction: column; gap: 2px; }
.custom::before { order: 2; border-width: 4px; border-bottom: 0; }
.custom::after { content: ""; width: 8px; height: 1px; background: #333; }

/* title bar */
.titlebar { display: flex; align-items: center; height: 31px; padding-bottom: 1px; flex: none; }
.quick, .account, .window-tools { display: flex; align-items: center; flex: none; }
.quick button:not(.drop):not(.custom), .account button, .cart, .help { width: 24px; height: 22px; }
.quick .app:not(.drop):not(.custom) { width: 23px; }
.space { width: 4px; }
.on { background: linear-gradient(#c3e0f5, #add3ef); border: 1px solid #1a66c0; }
.sep { width: 7px; height: 22px; background: linear-gradient(#b4b4b4, #b4b4b4) center / 1px 100% no-repeat; }
.titlebar h1 { margin-left: 25px; width: 170px; flex: none; padding-bottom: 4px; white-space: nowrap; }
.right-caret { width: 10px; }
.right-caret::before { content: ""; border: 4px solid transparent; border-left: 4px solid #444; border-right: 0; }
.search { width: 180px; height: 22px; border: 1px solid #111; background: #fff; padding: 0 3px; flex: none; appearance: none; outline: 0; }
.search::placeholder { color: #666; font-style: italic; opacity: 1; }
.account a { color: #222; text-decoration: none; margin-left: 1px; }
.window-tools { margin-left: auto; }
.cart, .help { margin-left: 4px; }
.win { width: 25px; height: 24px; }
.min { margin-left: 9px; }
.last.win { width: 22px; justify-content: flex-start; padding-left: 4px; }

/* ribbon tabs */
.tabs { display: flex; height: 21px; flex: none; }
.tabs a { padding: 4px 10px 0; color: #333; text-decoration: none; white-space: nowrap; }
.tabs .file { background: #2d76ba; color: #fff; margin-right: 2px; }
.more { margin-left: auto; }

/* ribbon */
.ribbon { display: flex; height: 96px; flex: none; padding-top: 1px; background: #e2eed6; border-bottom: 1px solid #c6cebe; color: #333; }
.panel { display: flex; flex-direction: column; background: #ececec; height: 93px; margin-right: 1px; flex: none; }
.tools { flex: 1; display: flex; justify-content: center; padding-top: 2px; }
.name { height: 17px; gap: 6px; width: 100%; }
.green { background: #e2eed6; }
.select { width: 48px; }
.props { width: 44px; }
.clip { width: 75px; }
.geo { width: 104px; }
.measure { width: 55px; margin-left: 1px; }
.prefab { width: 47px; margin: 0 2px 0 1px; }
.analyse { width: 41px; margin-right: 2px; }
.big { flex-direction: column; justify-content: flex-start; height: 72px; padding-top: 2px; gap: 5px; }
.big.on { width: 38px; padding-top: 1px; }
.big.off { color: #aaa; }
.big.two { gap: 4px; line-height: 17px; }
.stack { flex-direction: column; align-items: center; justify-content: flex-start; gap: 3px; }
.mid { width: 38px; height: 34px; }
.clip .tools { justify-content: space-between; padding-left: 9px; padding-right: 4px; }
.grid { display: grid; grid-auto-rows: 24px; }
.grid.one { grid-template-columns: 20px; }
.grid.three { grid-template-columns: 24px 12px 28px 22px 12px; }
.measure .tools { flex-direction: column; justify-content: flex-start; gap: 2px; }
.pair { display: flex; justify-content: center; height: 34px; }
.card { width: 60px; height: 93px; margin-right: 1px; border: 1px solid #cdd1c9; flex-direction: column; justify-content: flex-start; padding-top: 4px; gap: 4px; background: #e2eed6; }
.card.light { background: linear-gradient(#fff, #ececec); border-color: #ccc; }
.card span { white-space: nowrap; }
.card .tri { margin-top: auto; margin-bottom: 4px; }

/* options bar */
.options { display: flex; align-items: center; height: 28px; flex: none; background: #e2eed6; border-bottom: 2px solid #c8c8c8; padding-left: 7px; color: #111; }
.mode { color: #999; width: 78px; margin-right: 12px; border-right: 1px solid #aaa; }
.drop-box { display: flex; position: relative; align-items: center; }
.drop-box select { appearance: none; border: 0; background: #fff; width: 100%; padding: 0 4px; height: 20px; color: #222; }
.drop-box::after { content: ""; position: absolute; right: 4px; border: 4px solid transparent; border-top: 5px solid #111; border-bottom: 0; pointer-events: none; }
.options .drop-box { width: 88px; margin-left: 4px; }

/* working area */
.work { display: grid; grid-template-columns: 220px 1fr 165px; flex: 1; min-height: 0; }
.head { display: flex; align-items: center; justify-content: space-between; height: 20px; background: #ededed; padding-left: 2px; flex: none; }
.head button { width: 20px; }
.properties { display: flex; flex-direction: column; background: #f0f0f0; border-right: 2px solid #c8c8c8; min-width: 0; }
.type { align-self: flex-start; width: 216px; height: 71px; border: 1px solid #ccc; border-left: 0; justify-content: flex-start; padding: 0 1px 0 3px; gap: 4px; text-align: left; color: #333; }
.type .tri { margin-left: auto; }
.filter { display: flex; align-items: center; height: 28px; gap: 5px; flex: none; }
.filter .drop-box { width: 133px; }
.filter select { height: 24px; border: 1px solid #777; border-radius: 2px; background: linear-gradient(#f4f4f4, #dadada); padding: 0 2px; }
.filter button { gap: 4px; color: #111; }
.sheet { display: flex; flex: 1; min-height: 0; overflow: hidden; }
table { width: 199px; border-collapse: separate; border-spacing: 0; table-layout: fixed; background: #fff; align-self: flex-start; flex: none; color: #000; }
.c1 { width: 94px; }
.c3 { width: 12px; }
tr { height: 20px; }
th, td { height: 20px; padding: 0 2px; font-weight: 400; text-align: left; vertical-align: top; border-bottom: 1px dotted #777; border-right: 1px dotted #777; line-height: 18px; white-space: nowrap; overflow: hidden; }
th { padding-left: 10px; }
.ro { color: #777; }
.group th, .group td { background: #dcdcdc; border: 0; padding: 0 2px; }
.group td svg { margin: 4px 0 0 -2px; }
.edit { padding: 0; }
.edit input { display: block; width: 100%; height: 19px; border: 1px solid #000; padding: 0 1px; outline: 0; background: #fff; }
.vbar { width: 16px; margin-left: 1px; background: #ededed; display: flex; flex-direction: column; align-items: center; padding: 7px 0 6px; }
.up, .down { border: 3px solid transparent; }
.up { border-bottom: 4px solid #333; border-top: 0; }
.down { border-top: 4px solid #333; border-bottom: 0; margin-top: auto; }
.thumb-v { width: 14px; height: 134px; margin-top: 7px; border: 1px solid #8c8c8c; border-radius: 2px; background: linear-gradient(#666, #666) center 62px / 6px 1px no-repeat, linear-gradient(#666, #666) center 65px / 6px 1px no-repeat, linear-gradient(#666, #666) center 68px / 6px 1px no-repeat, linear-gradient(90deg, #f5f5f5, #b9bdc2); }
.foot { display: flex; align-items: center; justify-content: space-between; height: 25px; padding: 0 4px 2px 2px; flex: none; }
.foot a { color: #1464bc; }
.foot button { width: 73px; height: 19px; border: 1px solid #b5bab8; border-radius: 3px; background: #f4f4f4; color: #888; }

.view { display: flex; flex-direction: column; background: #fff; min-width: 0; border-right: 3px solid #f0f0f0; }
.doc-tabs { display: flex; justify-content: space-between; height: 20px; background: #c8c8c8; flex: none; }
.doc { display: flex; align-items: center; width: 128px; background: #fff; padding-left: 4px; gap: 6px; color: #333; }
.doc strong { font-weight: 700; }
.doc button { margin-left: auto; width: 20px; }
.stage { flex: 1; display: flex; min-height: 0; }
.canvas { flex: 1; position: relative; overflow: hidden; min-width: 0; background: #fefefe; }
.drawing { position: absolute; left: 160px; top: 284px; font: 10px "Liberation Mono", monospace; fill: #1550ba; }
.navbar { position: absolute; right: 0; top: 2px; font: 700 10px "Liberation Sans", sans-serif; fill: #6b9fc8; }
.wide { padding-top: 9px; background: #f0f0f0; }
.wide .thumb-v, .thumb-h { background: linear-gradient(#fafafa, #cfcfcf); height: 15px; width: 15px; border: 1px solid #888; border-radius: 1px; }
.wide .thumb-v { margin-top: 233px; }
.view-bar { display: flex; height: 20px; flex: none; padding: 0 0 2px 2px; background: #f0f0f0; }
.controls { display: flex; align-items: center; flex: none; }
.controls button { width: 21px; height: 18px; }
.controls .scale { width: 76px; padding-left: 7px; font: 10px "Liberation Mono", monospace; color: #000; }
.hbar { flex: 1; display: flex; align-items: center; padding: 0 24px 0 7px; background: #ececec; }
.left, .right { border: 3px solid transparent; }
.left { border-right: 4px solid #333; border-left: 0; }
.right { border-left: 4px solid #333; border-right: 0; margin-left: auto; }
.thumb-h { margin-left: 48%; }

.browser { background: #fff; border-left: 2px solid #c8c8c8; min-width: 0; }
.browser .head { padding-left: 3px; }
.browser .head button { width: 12px; margin-right: -1px; }
.tree { margin: 0; padding: 0; list-style: none; color: #000; }
.tree li { display: flex; align-items: center; height: 20px; white-space: nowrap; }
.node { width: 20px; height: 20px; }
.ico { width: 16px; height: 16px; margin: 0 4px 0 1px; }
.tree span { padding: 0 2px; line-height: 20px; }
.child span { margin-left: 5px; }
.tree .sel { background: #dfe1e0; padding-right: 3px; }

/* status bar */
.status { display: flex; align-items: center; height: 23px; flex: none; border-top: 1px solid #bbb; color: #111; padding-top: 2px; }
.status output { width: 489px; flex: none; }
.status-tools, .select-tools { display: flex; align-items: center; }
.status .drop-box { width: 204px; margin: 0 8px 0 7px; }
.status .drop-box select { height: 18px; color: #777; padding-left: 2px; background: #fbfbfb; }
.pale::after { border-top-color: #999; }
.count { width: 32px; margin-left: 3px; }
.add-i { margin-left: 8px; }
.select-tools { margin-left: auto; gap: 8px; padding-right: 5px; }

/* corner mark laid over the window */
.watermark { position: absolute; right: 16px; bottom: 6px; display: flex; align-items: flex-end; opacity: .75; pointer-events: none; }
.watermark span { font: 700 25px/24px "DejaVu Sans Mono", monospace; color: #6fa2c2; margin: 0 0 8px 2px; }
```
